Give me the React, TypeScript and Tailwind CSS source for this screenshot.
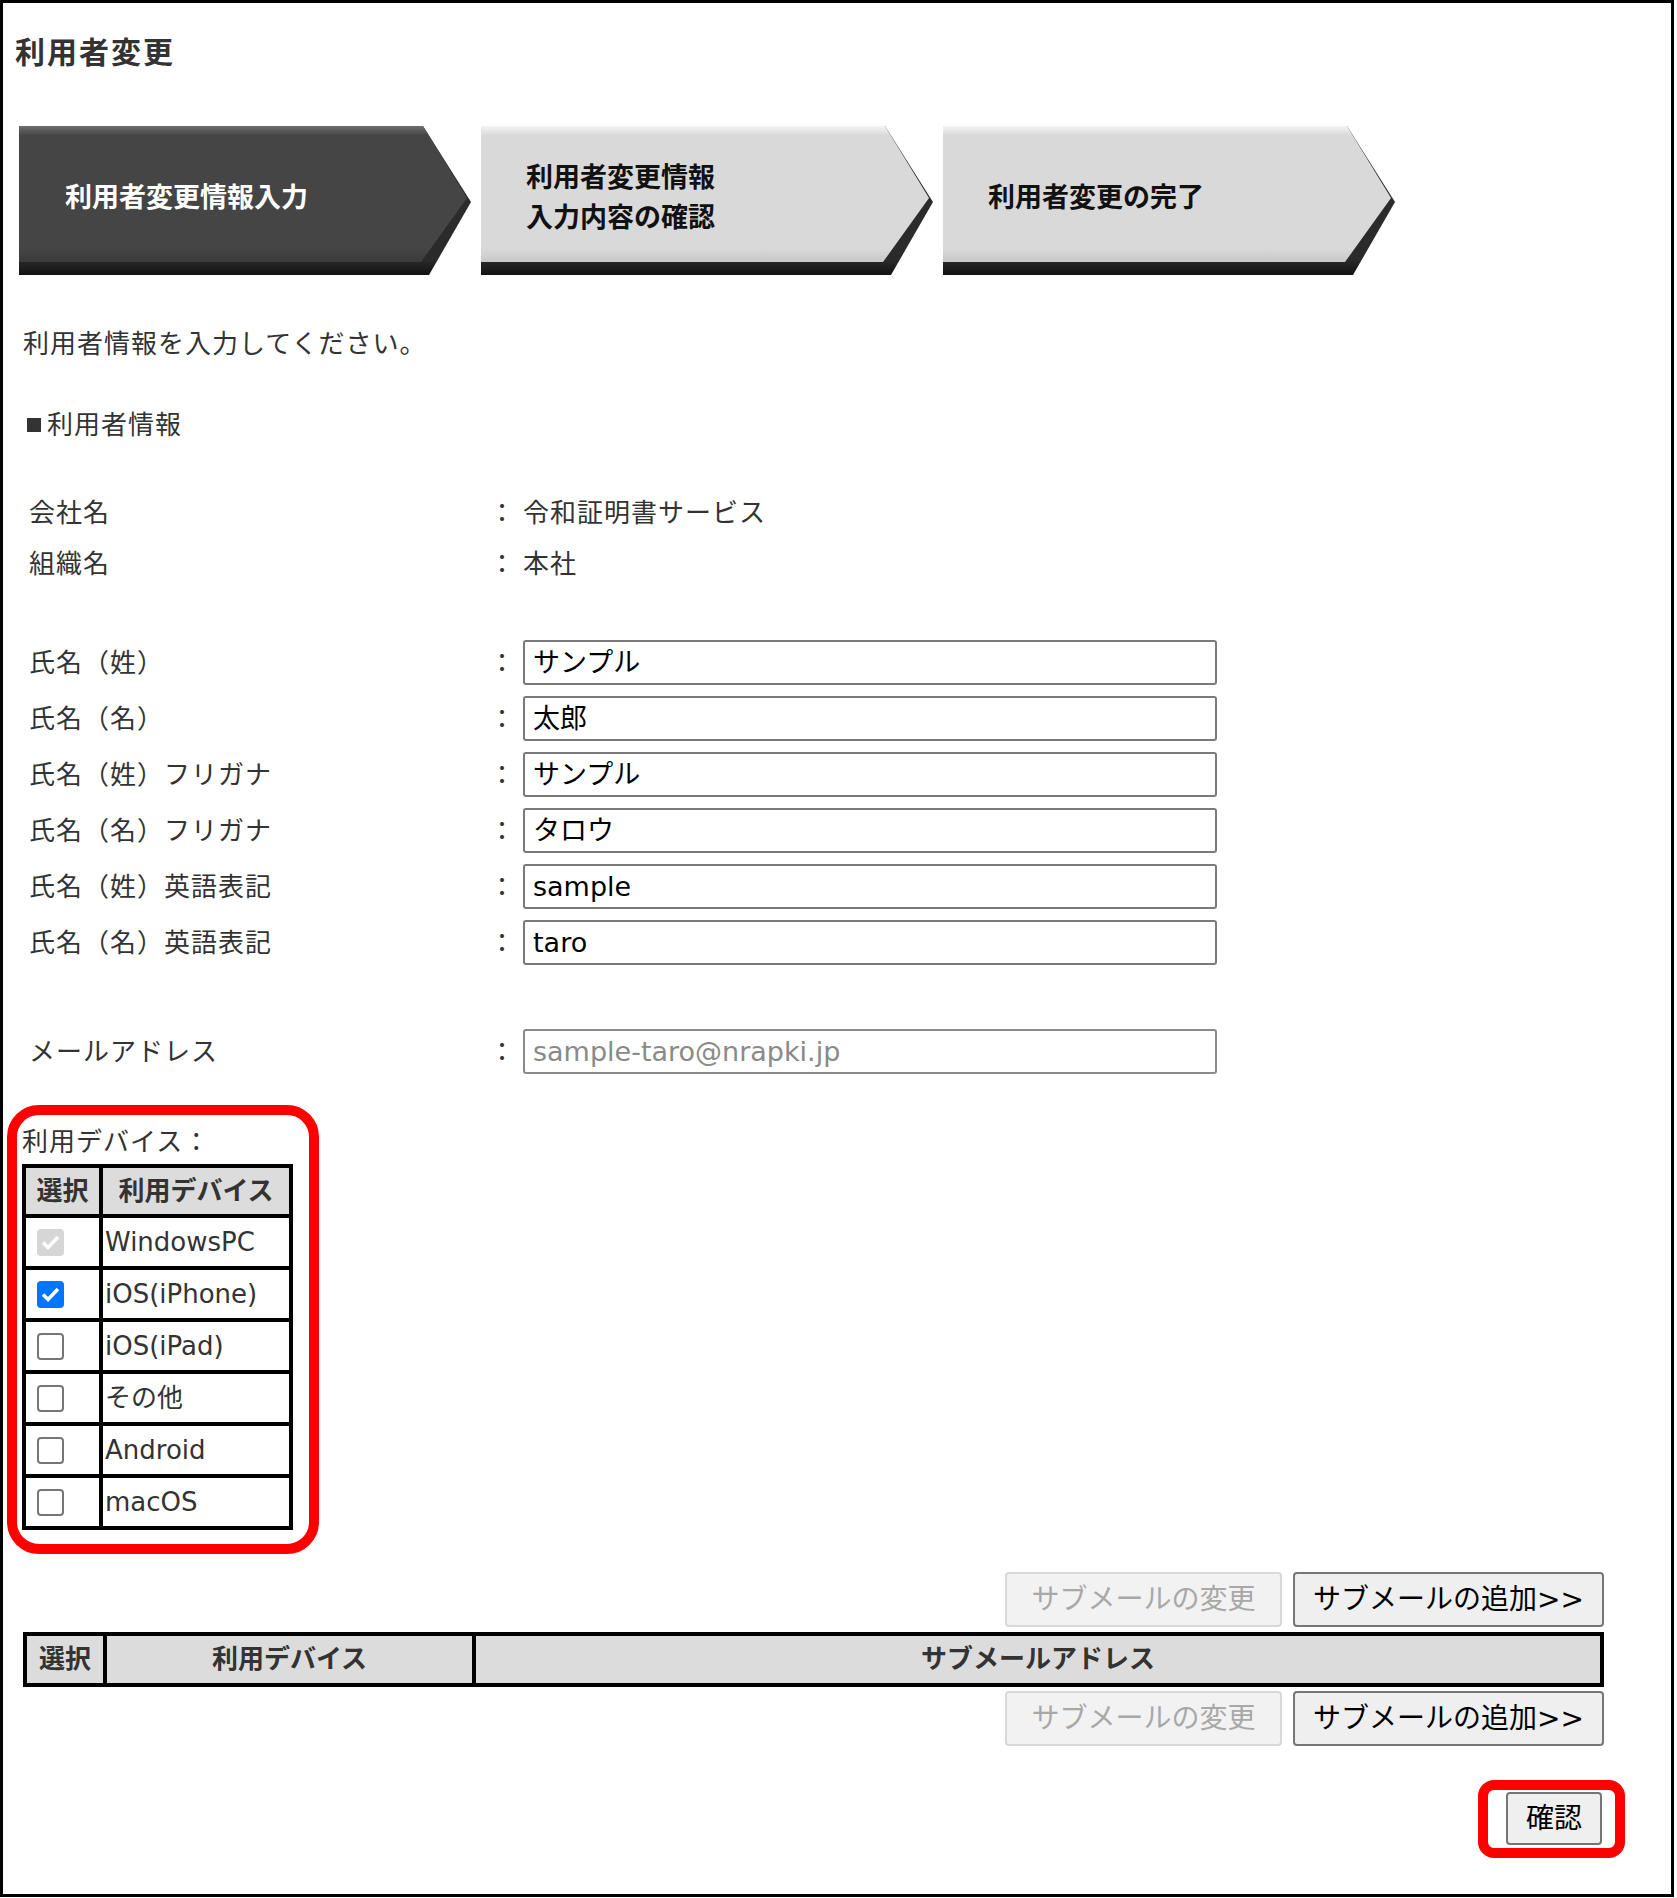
import React from "react";

const FONT = "font-['DejaVu_Sans','Noto_Sans_CJK_JP',sans-serif]";

type StepProps = { id: string; dark?: boolean; lines: string[] };

function StepArrow({ id, dark, lines }: StepProps) {
  const face = dark ? ["#6e6e6e", "#454545", "#3b3b3b"] : ["#f4f4f4", "#d9d9d9", "#c8c8c8"];
  return (
    <div className="relative h-[149px] w-[452px] shrink-0">
      <svg className="absolute inset-0" width="452" height="149" viewBox="0 0 452 149">
        <defs>
          <linearGradient id={`face-${id}`} x1="0" y1="0" x2="0" y2="1">
            <stop offset="0" stopColor={face[0]} />
            <stop offset="0.07" stopColor={face[1]} />
            <stop offset="0.9" stopColor={face[1]} />
            <stop offset="1" stopColor={face[2]} />
          </linearGradient>
          <linearGradient id={`base-${id}`} x1="0" y1="0" x2="0" y2="1">
            <stop offset="0" stopColor="#2e2e2e" />
            <stop offset="0.9" stopColor="#2a2a2a" />
            <stop offset="1" stopColor="#121212" />
          </linearGradient>
        </defs>
        <polygon points="0,0 404,0 452,76 410,149 0,149" fill={`url(#base-${id})`} />
        <polygon points="0,0 404,0 448,72 402,136 0,136" fill={`url(#face-${id})`} />
      </svg>
      <div
        className={
          dark
            ? "relative flex h-[144px] flex-col justify-center pl-[46px] text-[27px] font-bold leading-[40px] text-white"
            : "relative flex h-[144px] flex-col justify-center pl-[45px] text-[27px] font-bold leading-[40px] text-[#111]"
        }
      >
        {lines.map((l) => (
          <div key={l}>{l}</div>
        ))}
      </div>
    </div>
  );
}

function Row({ label, children, className }: { label: string; children: React.ReactNode; className?: string }) {
  return (
    <div className={"ml-[26px] flex items-center " + (className ?? "")}>
      <div className="w-[460px] text-[26px] leading-[36px] tracking-[1px] text-[#333]">{label}</div>
      <div className="w-[34px] text-[26px] leading-[36px] text-[#333]">：</div>
      {children}
    </div>
  );
}

function TextBox({ value, muted }: { value: string; muted?: boolean }) {
  return (
    <div
      className={
        muted
          ? "flex h-[45px] w-[694px] items-center rounded-[3px] border-2 border-[#8a8a8a] bg-white pl-[8px] text-[27px] leading-none text-[#8a8a8a]"
          : "flex h-[45px] w-[694px] items-center rounded-[3px] border-2 border-[#7a7a7a] bg-white pl-[8px] text-[27px] leading-none text-black"
      }
    >
      {value}
    </div>
  );
}

function CheckMark() {
  return (
    <svg width="27" height="27" viewBox="0 0 27 27">
      <path d="M6 13.5 L11 18.5 L21 8" fill="none" stroke="white" strokeWidth="3.6" />
    </svg>
  );
}

function Box({ state }: { state: "disabled" | "checked" | "off" }) {
  if (state === "disabled")
    return (
      <span className="inline-flex h-[27px] w-[27px] items-center justify-center rounded-[4px] bg-[#d6d6d6]">
        <CheckMark />
      </span>
    );
  if (state === "checked")
    return (
      <span className="inline-flex h-[27px] w-[27px] items-center justify-center rounded-[4px] bg-[#0075ff]">
        <CheckMark />
      </span>
    );
  return <span className="inline-block h-[27px] w-[27px] rounded-[4px] border-2 border-[#767676] bg-white" />;
}

const devices: { name: string; state: "disabled" | "checked" | "off" }[] = [
  { name: "WindowsPC", state: "disabled" },
  { name: "iOS(iPhone)", state: "checked" },
  { name: "iOS(iPad)", state: "off" },
  { name: "その他", state: "off" },
  { name: "Android", state: "off" },
  { name: "macOS", state: "off" },
];

function SubButtons() {
  return (
    <div className="flex justify-end gap-[11px] pr-[67px]">
      <div className="flex h-[55px] w-[277px] items-center justify-center rounded-[4px] border-2 border-[#d8d8d8] bg-[#f2f2f2] text-[28px] text-[#a8a8a8]">
        サブメールの変更
      </div>
      <div className="flex h-[55px] w-[311px] items-center justify-center rounded-[4px] border-2 border-[#767676] bg-[#efefef] text-[28px] text-black">
        サブメールの追加&gt;&gt;
      </div>
    </div>
  );
}

export default function App() {
  return (
    <div className={"h-[1897px] w-[1674px] border-[3px] border-black bg-white " + FONT}>
      <h1 className="ml-[12px] pt-[30px] text-[30px] font-bold leading-[40px] tracking-[2px] text-[#333]">利用者変更</h1>

      <div className="ml-[16px] mt-[53px] flex gap-[10px]">
        <StepArrow id="s1" dark lines={["利用者変更情報入力"]} />
        <StepArrow id="s2" lines={["利用者変更情報", "入力内容の確認"]} />
        <StepArrow id="s3" lines={["利用者変更の完了"]} />
      </div>

      <p className="ml-[20px] mt-[51px] text-[26px] leading-[36px] tracking-[1px] text-[#333]">利用者情報を入力してください。</p>

      <div className="ml-[24px] mt-[45px] flex items-center text-[26px] leading-[36px] tracking-[1px] text-[#333]">
        <span className="mr-[6px] inline-block h-[14px] w-[14px] bg-[#333]" />
        利用者情報
      </div>

      <Row label="会社名" className="mt-[52px]">
        <span className="text-[26px] leading-[36px] tracking-[1px] text-[#333]">令和証明書サービス</span>
      </Row>
      <Row label="組織名" className="mt-[15px]">
        <span className="text-[26px] leading-[36px] tracking-[1px] text-[#333]">本社</span>
      </Row>

      <div className="mt-[58px] flex flex-col gap-[11px]">
        <Row label="氏名（姓）">
          <TextBox value="サンプル" />
        </Row>
        <Row label="氏名（名）">
          <TextBox value="太郎" />
        </Row>
        <Row label="氏名（姓）フリガナ">
          <TextBox value="サンプル" />
        </Row>
        <Row label="氏名（名）フリガナ">
          <TextBox value="タロウ" />
        </Row>
        <Row label="氏名（姓）英語表記">
          <TextBox value="sample" />
        </Row>
        <Row label="氏名（名）英語表記">
          <TextBox value="taro" />
        </Row>
      </div>

      <Row label="メールアドレス" className="mt-[64px]">
        <TextBox value="sample-taro@nrapki.jp" muted />
      </Row>

      {/* device selection, highlighted */}
      <div className="relative ml-[19px] mt-[52px] w-[271px]">
        <div className="pointer-events-none absolute -bottom-[24px] -left-[15px] -right-[26px] -top-[21px] rounded-[32px] border-[10px] border-[#ff0000]" />
        <div className="text-[26px] leading-[32px] tracking-[1px] text-[#333]">利用デバイス：</div>
        <table className="mt-[6px] w-[271px] table-fixed border-collapse border-[4px] border-black">
          <colgroup>
            <col className="w-[77px]" />
            <col />
          </colgroup>
          <thead>
            <tr className="bg-[#dcdcdc]">
              <th className="h-[50px] border-[4px] border-black p-0 text-center text-[26px] font-bold text-[#333]">選択</th>
              <th className="h-[50px] border-[4px] border-black p-0 text-center text-[26px] font-bold text-[#333]">利用デバイス</th>
            </tr>
          </thead>
          <tbody>
            {devices.map((d) => (
              <tr key={d.name}>
                <td className="h-[52px] border-[4px] border-black p-0 align-middle">
                  <div className="flex items-center pl-[11px]">
                    <Box state={d.state} />
                  </div>
                </td>
                <td className="h-[52px] border-[4px] border-black py-0 pl-[2px] text-[26px] text-[#333]">{d.name}</td>
              </tr>
            ))}
          </tbody>
        </table>
      </div>

      <div className="mt-[42px]">
        <SubButtons />
      </div>

      <table className="ml-[20px] mt-[5px] w-[1581px] table-fixed border-collapse border-[4px] border-black">
        <colgroup>
          <col className="w-[80px]" />
          <col className="w-[369px]" />
          <col />
        </colgroup>
        <thead>
          <tr className="bg-[#dcdcdc]">
            <th className="h-[51px] border-[4px] border-black p-0 text-center text-[26px] font-bold text-[#333]">選択</th>
            <th className="h-[51px] border-[4px] border-black p-0 text-center text-[26px] font-bold text-[#333]">利用デバイス</th>
            <th className="h-[51px] border-[4px] border-black p-0 text-center text-[26px] font-bold text-[#333]">サブメールアドレス</th>
          </tr>
        </thead>
      </table>

      <div className="mt-[4px]">
        <SubButtons />
      </div>

      <div className="mt-[46px] flex justify-end pr-[69px]">
        <div className="relative">
          <div className="pointer-events-none absolute -bottom-[13px] -left-[28px] -right-[23px] -top-[12px] rounded-[16px] border-[10px] border-[#ff0000]" />
          <div className="flex h-[53px] w-[96px] items-center justify-center rounded-[4px] border-2 border-[#767676] bg-[#efefef] text-[28px] text-black">
            確認
          </div>
        </div>
      </div>
    </div>
  );
}
